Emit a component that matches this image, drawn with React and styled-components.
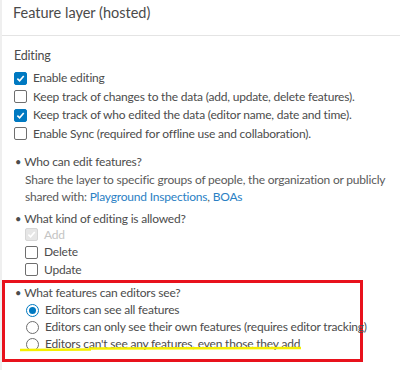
import React from 'react';
import styled, { createGlobalStyle } from 'styled-components';

const GlobalStyle = createGlobalStyle`
  body {
    margin: 0;
    background: #ffffff;
    font-family: Lato, "Open Sans", sans-serif;
  }
`;

const Panel = styled.div`
  width: 398px;
  height: 370px;
  border-left: 2px solid #efefef;
  background: #fff;
  color: #4c4c4c;
  overflow: hidden;
  white-space: nowrap;
`;

const Header = styled.div`
  height: 32px;
  padding: 3px 0 0 11px;
  border-bottom: 1px solid #e4e4e4;
  font-size: 14.5px;
  line-height: 20px;
  color: #4a4a4a;
`;

const Section = styled.div`
  padding-left: 12px;
  font-size: 12px;
  letter-spacing: -0.2px;
  line-height: 18px;
`;

const Label = styled.div`
  margin-top: ${(p) => p.$top || 0}px;
  color: #4c4c4c;
  font-size: 12.5px;
`;

const Row = styled.label`
  display: flex;
  align-items: center;
  gap: 6px;
  height: ${(p) => p.$h || 18}px;
  padding-left: ${(p) => p.$indent || 0}px;
  color: ${(p) => (p.$disabled ? '#c4c4c4' : '#4c4c4c')};
`;

const Box = styled.span`
  width: 13px;
  height: 13px;
  box-sizing: border-box;
  border-radius: 2px;
  border: 1px solid ${(p) => (p.$disabled ? '#d6d6d6' : p.$checked ? '#0079c1' : '#6e6e6e')};
  background: ${(p) => (p.$disabled ? '#e6e6e6' : p.$checked ? '#0079c1' : '#fff')};
  display: flex;
  align-items: center;
  justify-content: center;
  flex: none;
`;

const Radio = styled.span`
  width: 13px;
  height: 13px;
  box-sizing: border-box;
  border-radius: 50%;
  border: 1px solid ${(p) => (p.$checked ? '#0079c1' : '#6e6e6e')};
  background: #fff;
  display: flex;
  align-items: center;
  justify-content: center;
  flex: none;

  &::after {
    content: '';
    display: ${(p) => (p.$checked ? 'block' : 'none')};
    width: 7px;
    height: 7px;
    border-radius: 50%;
    background: #0079c1;
  }
`;

const Bullet = styled.div`
  display: flex;
  gap: 3px;
  margin-top: ${(p) => p.$top || 0}px;
  height: ${(p) => p.$h || 18}px;
  align-items: center;
  padding-left: 1px;

  &::before {
    content: '•';
    font-size: 11px;
  }
`;

const Desc = styled.p`
  margin: 0;
  padding-left: 11px;
  line-height: 17px;
  color: #5a5a5a;
`;

const Link = styled.a`
  color: #2a80c4;
  text-decoration: none;
`;

const Highlight = styled.div`
  position: relative;
  width: 361px;
  box-sizing: border-box;
  margin-top: 1px;
  border: 3px solid #e8121c;
  padding: 2px 0 6px 9px;
  font-size: 12px;
  letter-spacing: -0.2px;
  line-height: 18px;
`;

const Marker = styled.svg`
  position: absolute;
  left: 0;
  top: 0;
  pointer-events: none;
`;

const Check = () => (
  <svg width="9" height="9" viewBox="0 0 10 10">
    <path d="M1.5 5.2 L4 7.6 L8.6 2.2" fill="none" stroke="#fff" strokeWidth="1.8" />
  </svg>
);

const CheckRow = ({ checked, disabled, indent, h, children }) => (
  <Row $indent={indent} $h={h} $disabled={disabled}>
    <Box $checked={checked} $disabled={disabled}>
      {checked && <Check />}
    </Box>
    {children}
  </Row>
);

export default function App() {
  return (
    <>
      <GlobalStyle />
      <Panel>
        <Header>Feature layer (hosted)</Header>
        <Section>
          <Label $top={11}>Editing</Label>
          <Label $top={4} />
          <CheckRow checked h={18.5}>Enable editing</CheckRow>
          <CheckRow h={18.5}>Keep track of changes to the data (add, update, delete features).</CheckRow>
          <CheckRow checked h={18.5}>Keep track of who edited the data (editor name, date and time).</CheckRow>
          <CheckRow h={18.5}>Enable Sync (required for offline use and collaboration).</CheckRow>

          <Bullet $top={10}>Who can edit features?</Bullet>
          <Desc>
            Share the layer to specific groups of people, the organization or publicly
            <br />
            shared with: <Link>Playground Inspections</Link>, <Link>BOAs</Link>
          </Desc>

          <Bullet $top={6} $h={15}>What kind of editing is allowed?</Bullet>
          <CheckRow checked disabled indent={11} h={17.5}>Add</CheckRow>
          <CheckRow indent={11} h={17.5}>Delete</CheckRow>
          <CheckRow indent={11} h={17.5}>Update</CheckRow>
        </Section>
        <Highlight>
          <Bullet $h={17}>What features can editors see?</Bullet>
          <Row $indent={12} $h={17}>
            <Radio $checked />
            Editors can see all features
          </Row>
          <Row $indent={12} $h={17}>
            <Radio />
            Editors can only see their own features (requires editor tracking)
          </Row>
          <Row $indent={12} $h={17}>
            <Radio />
            Editors can&apos;t see any features, even those they add
          </Row>
          <Marker width="320" height="76" viewBox="0 0 320 76">
            <path d="M15 67 L86 66.5" stroke="#f4ef00" strokeWidth="2.5" fill="none" />
            <path d="M84 65.5 L296 65" stroke="#f4ef00" strokeWidth="2.5" fill="none" />
          </Marker>
        </Highlight>
      </Panel>
    </>
  );
}
